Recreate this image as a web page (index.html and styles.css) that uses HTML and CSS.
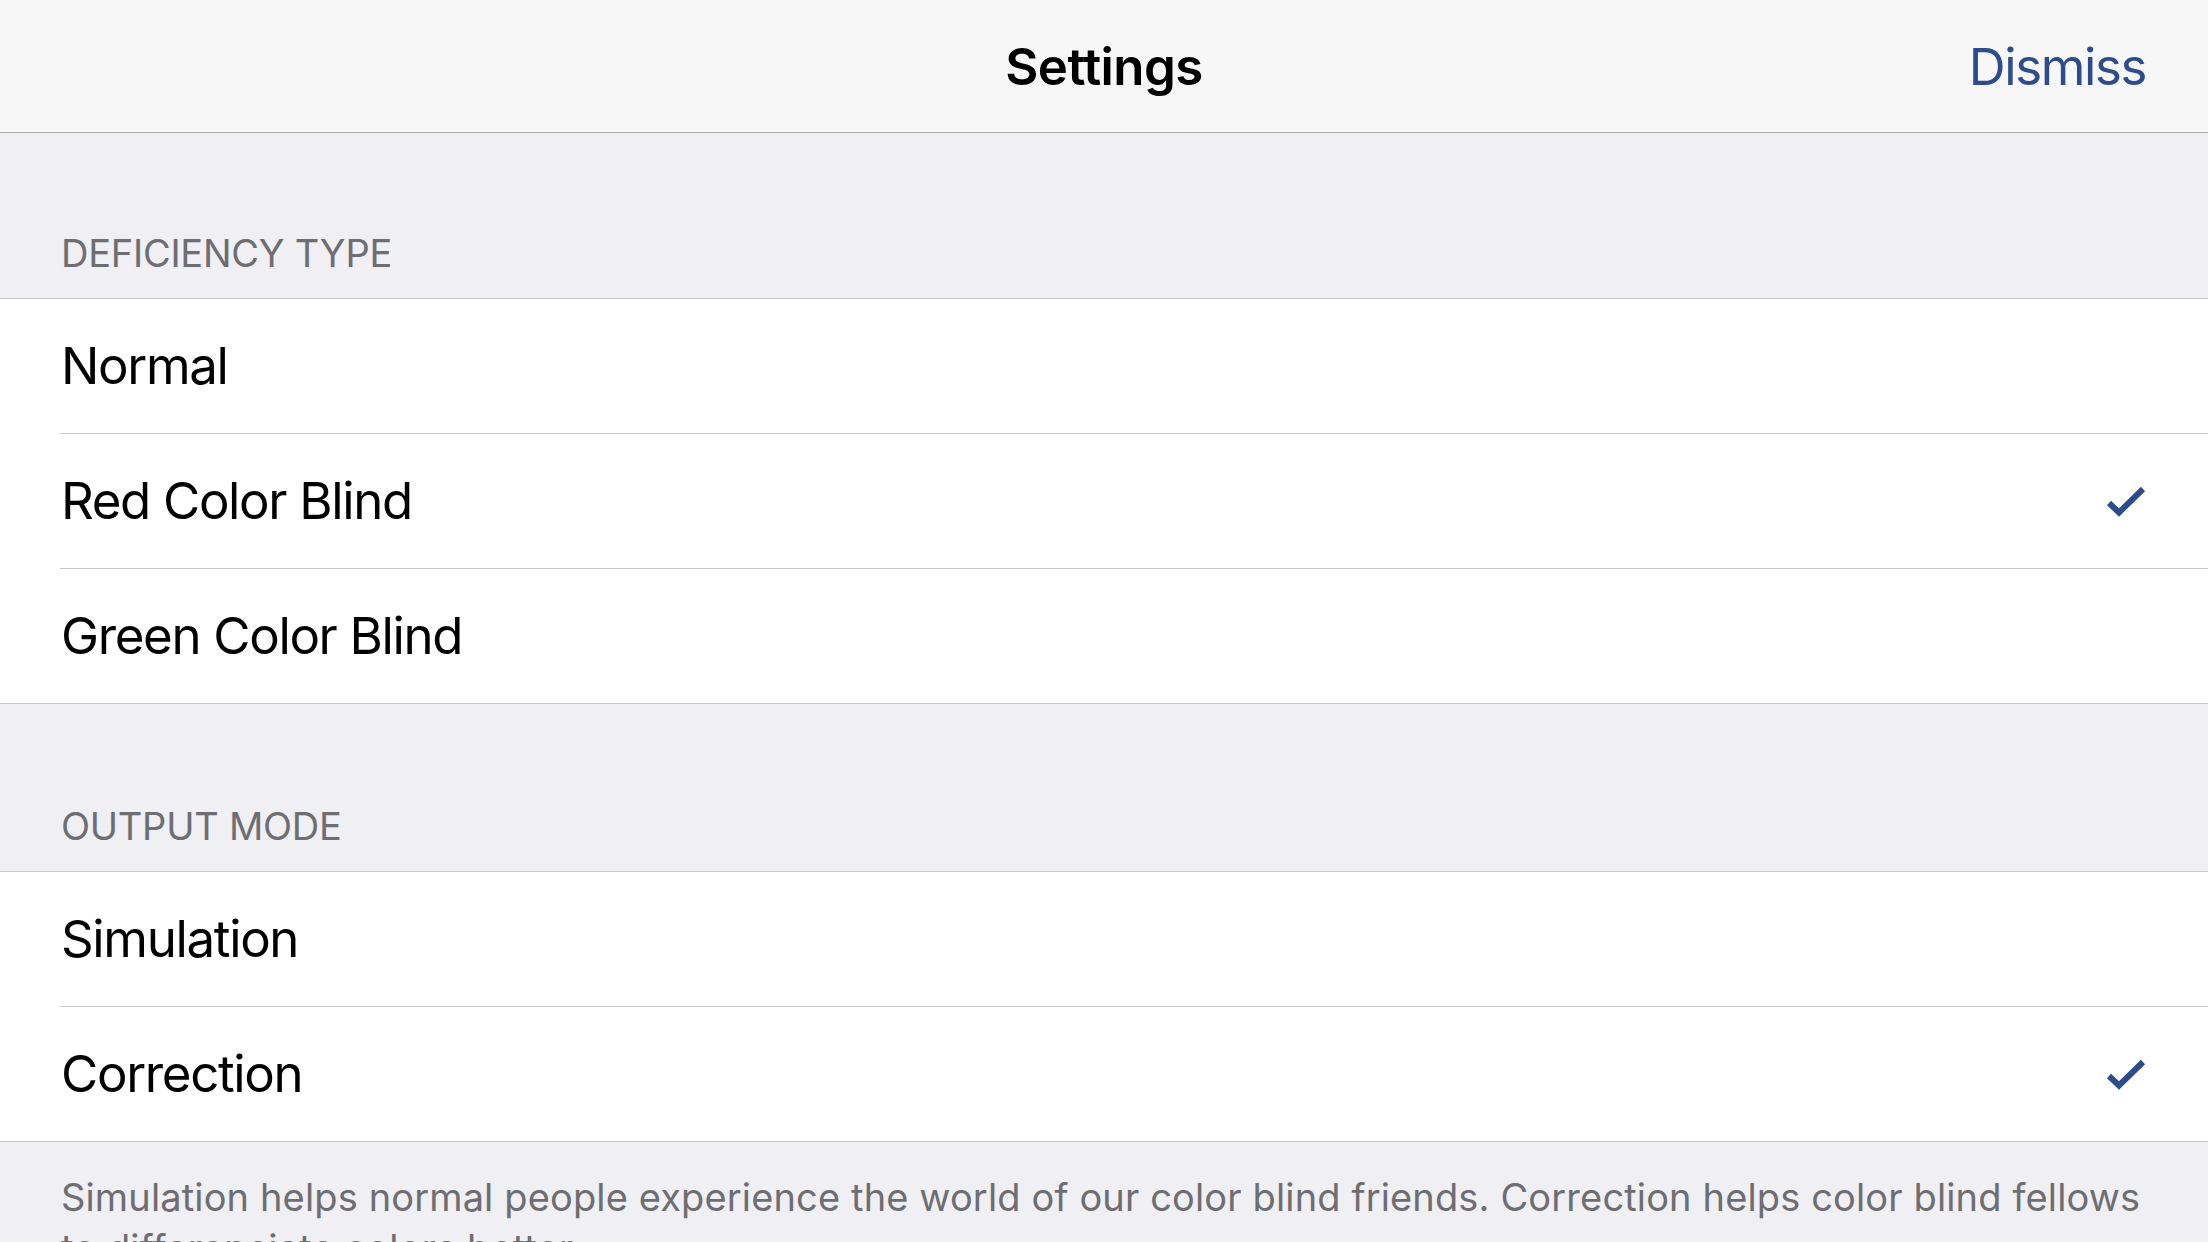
FILE: index.html
```html
<!DOCTYPE html>
<html lang="en">
<head>
<meta charset="utf-8">
<title>Settings</title>
<link rel="stylesheet" href="styles.css">
</head>
<body>
<div class="screen">
  <header class="navbar">
    <div class="nav-side"></div>
    <h1 class="nav-title">Settings</h1>
    <div class="nav-side nav-right"><span class="nav-button">Dismiss</span></div>
  </header>

  <section class="group">
    <div class="group-header first"><span>DEFICIENCY TYPE</span></div>
    <ul class="rows">
      <li class="row"><span class="row-label">Normal</span></li>
      <li class="row"><span class="row-label">Red Color Blind</span>
        <svg class="check" width="40" height="32" viewBox="0 0 40 32"><path d="M3 18 L13 27.5 L37 4" fill="none" stroke="#2c4c8b" stroke-width="6" stroke-linejoin="miter"/></svg>
      </li>
      <li class="row"><span class="row-label">Green Color Blind</span></li>
    </ul>
  </section>

  <section class="group">
    <div class="group-header second"><span>OUTPUT MODE</span></div>
    <ul class="rows">
      <li class="row"><span class="row-label">Simulation</span></li>
      <li class="row"><span class="row-label">Correction</span>
        <svg class="check" width="40" height="32" viewBox="0 0 40 32"><path d="M3 18 L13 27.5 L37 4" fill="none" stroke="#2c4c8b" stroke-width="6" stroke-linejoin="miter"/></svg>
      </li>
    </ul>
    <p class="group-footer">Simulation helps normal people experience the world of our color blind friends. Correction helps color blind fellows to differenciate colors better.</p>
  </section>
</div>
</body>
</html>
```

FILE: styles.css
```css
html, body {
  margin: 0;
  padding: 0;
}
body {
  background: #efeff4;
  font-family: Inter, "Noto Sans", "Liberation Sans", sans-serif;
  width: 2208px;
  height: 1242px;
  overflow: hidden;
}
.screen {
  display: flex;
  flex-direction: column;
}
.navbar {
  height: 132px;
  background: #f7f7f7;
  border-bottom: 1px solid #a9a9ac;
  display: grid;
  grid-template-columns: 1fr auto 1fr;
  align-items: center;
  padding: 0 62px;
}
.nav-title {
  margin: 0;
  font-size: 51px;
  font-weight: 600;
  color: #000;
  letter-spacing: -0.6px;
}
.nav-right {
  display: flex;
  justify-content: flex-end;
}
.nav-button {
  font-size: 51px;
  color: #2c4c8b;
  letter-spacing: -1.4px;
}
.group-header {
  display: flex;
  align-items: flex-end;
  padding: 0 61px;
  color: #6d6d72;
  font-size: 38px;
  line-height: 38px;
  letter-spacing: -0.25px;
}
.group-header.first {
  height: 165px;
}
.group-header.second {
  height: 167px;
}
.group-header span {
  padding-bottom: 26px;
}
.rows {
  list-style: none;
  margin: 0;
  padding: 0;
  background: #fff;
  border-top: 1px solid #c8c7cc;
  border-bottom: 1px solid #c8c7cc;
}
.row {
  height: 134px;
  margin-left: 60px;
  padding-right: 62px;
  display: flex;
  align-items: center;
  justify-content: space-between;
  border-bottom: 1px solid #c8c7cc;
}
.row:last-child {
  border-bottom: none;
}
.row-label {
  font-size: 51px;
  color: #000;
  letter-spacing: -1.35px;
  padding-left: 1px;
  padding-bottom: 2px;
}
.check {
  display: block;
  margin-right: 0;
}
.group-footer {
  margin: 0;
  padding: 30px 61px 0;
  color: #6d6d72;
  font-size: 38px;
  line-height: 51px;
  letter-spacing: 0.14px;
}
```
